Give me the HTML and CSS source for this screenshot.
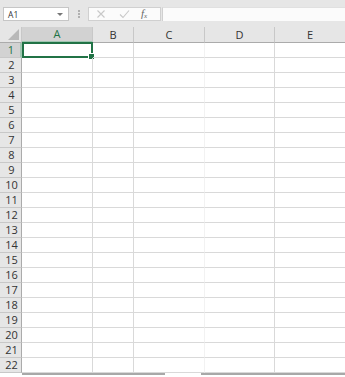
FILE: index.html
```html
<!DOCTYPE html>
<html>
<head>
<meta charset="utf-8">
<link rel="stylesheet" href="styles.css">
</head>
<body>
<div class="toolbar">
  <div class="namebox"><span class="ref">A1</span><span class="caret"></span></div>
  <div class="grip"><i></i><i></i><i></i></div>
  <div class="fxbox">
    <svg class="ic" width="10" height="10" viewBox="0 0 10 10"><path d="M1.5 1.5 L8.5 8.5 M8.5 1.5 L1.5 8.5" stroke="#c8c8c8" stroke-width="1.1" fill="none"/></svg>
    <svg class="ic" width="11" height="10" viewBox="0 0 11 10"><path d="M1 5.5 L4 8.5 L10 1.5" stroke="#c8c8c8" stroke-width="1.1" fill="none"/></svg>
    <span class="fx">f<sub>x</sub></span>
  </div>
  <div class="input"></div>
</div>
<div class="sheet">
  <div class="corner"><span class="tri"></span></div>
  <div class="ch sel">A</div><div class="ch">B</div><div class="ch">C</div><div class="ch">D</div><div class="ch last">E</div>
</div>
<div class="rows" id="rows"></div>
<div class="scroll"><span class="hs1"></span><span class="hs2"></span></div>
<script>
var r = document.getElementById('rows'), h = '';
for (var i = 1; i <= 22; i++) {
  h += '<div class="rh' + (i === 1 ? ' sel' : '') + '">' + i + '</div>' +
       '<div class="c a">' + (i === 1 ? '<span class="cursor"></span>' : '') + '</div>' +
       '<div class="c b"></div><div class="c cc"></div><div class="c d"></div><div class="c e"></div>';
}
r.innerHTML = h;
</script>
</body>
</html>
```

FILE: styles.css
```css
* { box-sizing: border-box; }
html, body { margin: 0; padding: 0; }
body {
  width: 345px; height: 377px; overflow: hidden; background: #fff;
  font-family: "Open Sans", "Noto Sans", sans-serif; color: #222;
}
.toolbar {
  height: 27px; background: #e6e6e6; display: flex; align-items: flex-start;
  padding: 7px 0 0 3px;
}
.namebox {
  width: 66px; height: 14px; background: #fff; border: 1px solid #c6c6c6;
  display: flex; align-items: center; justify-content: space-between;
  padding: 0 5px 0 4px; position: relative;
}
.ref { font-size: 8.5px; color: #333; letter-spacing: 0.2px; }
.caret { width: 0; height: 0; border-left: 3px solid transparent; border-right: 3px solid transparent; border-top: 3px solid #777; }
.grip { width: 19px; height: 14px; display: flex; flex-direction: column; align-items: center; justify-content: center; gap: 1px; }
.grip i { width: 2px; height: 2px; background: #b0b0b0; display: block; }
.fxbox {
  width: 73px; height: 14px; background: #fbfbfb; border: 1px solid #d0d0d0;
  display: flex; align-items: center; padding-left: 7px; gap: 13px;
}
.fx { font-family: "Liberation Serif", serif; font-style: italic; font-size: 11px; color: #666; line-height: 1; margin-left: -2px; }
.fx sub { font-size: 7px; vertical-align: -1px; }
.input { flex: 1; height: 14px; background: #fbfbfb; border-left: 1px solid #d0d0d0; margin-left: 1px; border-top: 1px solid #e0e0e0;}
.sheet, .rows {
  display: grid; grid-template-columns: 22px 71px 41px 71px 70px 1fr;
}
.sheet { height: 16px; background: #e6e6e6; }
.corner { border-right: 1px solid #c8c8c8; border-bottom: 1px solid #ababab; position: relative; background: #e6e6e6; }
.tri { position: absolute; right: 2px; bottom: 2px; width: 0; height: 0; border-left: 11px solid transparent; border-bottom: 11px solid #b8b8b8; }
.ch {
  border-right: 1px solid #c8c8c8; border-bottom: 1px solid #ababab;
  font-size: 11px; line-height: 15px; text-align: center; color: #333;
}
.ch.last { border-right: none; }
.ch.sel { background: #d2d2d2; color: #217346; border-bottom: 2px solid #9fc6b1; line-height: 14px; }
.rows { grid-auto-rows: 15px; }
.rh {
  background: #e6e6e6; border-right: 1px solid #ababab; border-bottom: 1px solid #c8c8c8;
  font-size: 11px; line-height: 14px; text-align: center; color: #333; padding-left: 2px;
}
.rh.sel { background: #d2d2d2; color: #217346; border-right: 2px solid #9fc6b1; }
.c { border-right: 1px solid #d9d9d9; border-bottom: 1px solid #d9d9d9; position: relative; }
.c.cc { border-right-color: #f2f2f2; }
.c.e { border-right: none; }
.cursor {
  position: absolute; left: 0; top: -1px; width: 71px; height: 16px;
  border: 2px solid #217346;
}
.cursor::after {
  content: ""; position: absolute; right: -4px; bottom: -4px; width: 5px; height: 5px;
  background: #217346; border: 1px solid #fff;
}
.scroll { position: relative; height: 5px; }
.hs1 { position: absolute; left: 22px; top: 0; width: 143px; height: 2px; background: #a8a8a8; }
.hs2 { position: absolute; left: 201px; top: 0; right: 0; height: 2px; background: #a8a8a8; }
```
